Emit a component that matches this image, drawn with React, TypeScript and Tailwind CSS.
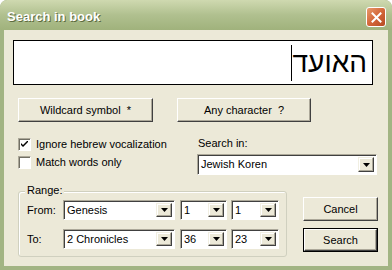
import React from 'react';

const DropArrow: React.FC = () => (
  <div className="w-[16px] h-full flex items-center justify-center bg-[#ece9d8] border border-t-[#f1efe2] border-l-[#f1efe2] border-r-[#404040] border-b-[#404040] shadow-[inset_-1px_-1px_0_#aca899,inset_1px_1px_0_#ffffff]">
    <svg width="7" height="4" viewBox="0 0 7 4">
      <path d="M0 0H7L3.5 4Z" fill="#000" />
    </svg>
  </div>
);

const Combo: React.FC<{ value: string; className?: string }> = ({ value, className = '' }) => (
  <div className={`flex bg-white border border-t-[#aca899] border-l-[#aca899] border-b-white border-r-white shadow-[inset_1px_1px_0_#404040] p-[2px] pl-[3px] ${className}`}>
    <span className="flex-1 leading-none self-center text-[11px] text-black">{value}</span>
    <DropArrow />
  </div>
);

const Button: React.FC<{ className?: string; isDefault?: boolean; children: React.ReactNode }> = ({
  className = '',
  isDefault,
  children,
}) => (
  <div className={`${isDefault ? 'border border-black' : ''} ${className}`}>
    <div className="h-full w-full flex items-center justify-center bg-[#ece9d8] border border-t-white border-l-white border-r-[#404040] border-b-[#404040] shadow-[inset_-1px_-1px_0_#aca899] text-[11px] text-black">
      {children}
    </div>
  </div>
);

const Checkbox: React.FC<{ checked?: boolean; label: string }> = ({ checked, label }) => (
  <div className="flex items-center gap-[5px] h-[13px]">
    <div className="w-[13px] h-[13px] bg-white border border-t-[#aca899] border-l-[#aca899] border-b-white border-r-white shadow-[inset_1px_1px_0_#716f64] flex items-center justify-center">
      {checked && (
        <svg width="7" height="7" viewBox="0 0 7 7">
          <path d="M0 2L0 4L2 6L7 1L7 -1L2 4Z" fill="#000" />
        </svg>
      )}
    </div>
    <span className="text-[11px] text-black leading-none">{label}</span>
  </div>
);

export default function App() {
  return (
    <div className="w-[392px] h-[270px] bg-[#a2b483] rounded-t-[7px] flex flex-col font-['Liberation_Sans',Tahoma,sans-serif] overflow-hidden">
      {/* title bar */}
      <div className="h-[30px] flex items-center justify-between pl-[7px] pr-[6px] pt-[4px] rounded-t-[7px] bg-gradient-to-b from-[#cfd9b0] via-[#b0c08f] to-[#a0b27c]">
        <span className="text-[13px] font-bold text-white [text-shadow:1px_1px_0_#5d6b3f]">Search in book</span>
        <div className="w-[20px] h-[20px] rounded-[3px] border border-white bg-gradient-to-br from-[#e79a6c] via-[#d4673a] to-[#b64a22] flex items-center justify-center">
          <svg width="11" height="11" viewBox="0 0 11 11">
            <path d="M1.5 1.5L9.5 9.5M9.5 1.5L1.5 9.5" stroke="#fff" strokeWidth="2" strokeLinecap="square" />
          </svg>
        </div>
      </div>

      {/* client area */}
      <div className="flex-1 mx-[4px] mb-[4px] bg-[#ece9d8] pl-[9px] pt-[10px] flex flex-col">
        <div className="w-[360px] h-[45px] bg-white border border-black flex items-center justify-end pr-[5px]">
          <div className="w-px h-[36px] bg-black mr-px" />
          <span dir="rtl" className="text-[28px] leading-none text-black">האועד</span>
        </div>

        <div className="flex gap-[24px] ml-[5px] mt-[13px]">
          <Button className="w-[135px] h-[24px]">Wildcard symbol&nbsp;&nbsp;*</Button>
          <Button className="w-[134px] h-[24px]">Any character&nbsp;&nbsp;?</Button>
        </div>

        <div className="flex ml-[5px] mt-[16px]">
          <div className="w-[179px] flex flex-col gap-[5px]">
            <Checkbox checked label="Ignore hebrew vocalization" />
            <Checkbox label="Match words only" />
          </div>
          <div className="flex flex-col">
            <span className="text-[11px] text-black leading-none ml-px">Search in:</span>
            <Combo value="Jewish Koren" className="w-[180px] h-[21px] mt-[5px]" />
          </div>
        </div>

        <div className="flex ml-[5px] mt-[16px]">
          <div className="relative w-[269px] h-[66px] border border-[#d0d0bf] rounded-[3px] shadow-[inset_1px_1px_0_#fff] pt-[8px] pl-[8px]">
            <span className="absolute left-[6px] top-[-7px] px-[2px] bg-[#ece9d8] text-[11px] leading-none text-black">Range:</span>
            <div className="flex items-center h-[20px]">
              <span className="w-[36px] text-[11px] text-black">From:</span>
              <Combo value="Genesis" className="w-[112px] h-[20px]" />
              <Combo value="1" className="w-[47px] h-[20px] ml-[5px]" />
              <Combo value="1" className="w-[48px] h-[20px] ml-[4px]" />
            </div>
            <div className="flex items-center h-[20px] mt-[9px]">
              <span className="w-[36px] text-[11px] text-black">To:</span>
              <Combo value="2 Chronicles" className="w-[112px] h-[20px]" />
              <Combo value="36" className="w-[47px] h-[20px] ml-[5px]" />
              <Combo value="23" className="w-[48px] h-[20px] ml-[4px]" />
            </div>
          </div>
          <div className="flex flex-col ml-[16px] mt-[6px] gap-[7px]">
            <Button className="w-[75px] h-[24px]">Cancel</Button>
            <Button isDefault className="w-[75px] h-[24px]">Search</Button>
          </div>
        </div>
      </div>
    </div>
  );
}
